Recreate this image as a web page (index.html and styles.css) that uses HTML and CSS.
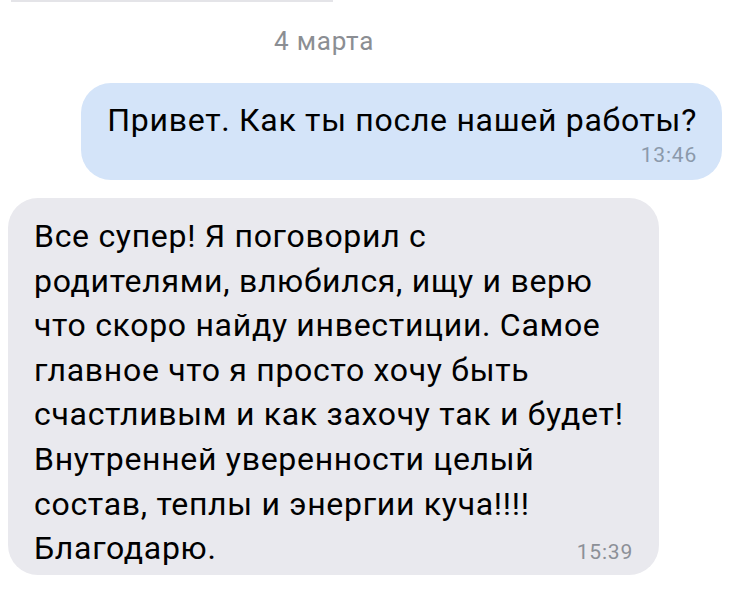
FILE: index.html
```html
<!DOCTYPE html>
<html lang="ru">
<head>
<meta charset="utf-8">
<link rel="stylesheet" href="styles.css">
</head>
<body>
<div class="chat">
  <div class="prev-edge"></div>
  <div class="date">4 марта</div>
  <div class="bubble out">
    <div class="text">Привет. Как ты после нашей работы?</div>
    <div class="time">13:46</div>
  </div>
  <div class="bubble in">
    <div class="text">Все супер! Я поговорил с<br>родителями, влюбился, ищу и верю<br>что скоро найду инвестиции. Самое<br>главное что я просто хочу быть<br>счастливым и как захочу так и будет!<br>Внутренней уверенности целый<br>состав, теплы и энергии куча!!!!<br>Благодарю.</div>
    <div class="time">15:39</div>
  </div>
</div>
</body>
</html>
```
FILE: styles.css
```css
html, body {
  margin: 0;
  padding: 0;
  background: #ffffff;
}

.chat {
  width: 739px;
  height: 590px;
  display: flex;
  flex-direction: column;
  font-family: Roboto, "Noto Sans", sans-serif;
  color: #000000;
  overflow: hidden;
}

.prev-edge {
  width: 322px;
  height: 2px;
  margin-left: 11px;
  background: #e4e4e8;
}

.date {
  align-self: flex-start;
  margin-top: 26px;
  margin-left: 274px;
  font-size: 26px;
  line-height: 26px;
  letter-spacing: 0.8px;
  color: #8b8e93;
}

.bubble {
  border-radius: 30px;
}

.bubble .text {
  font-size: 32px;
  letter-spacing: 0.7px;
}

.bubble .time {
  font-size: 21px;
  line-height: 20px;
  letter-spacing: 0.8px;
}

.out {
  align-self: flex-end;
  display: flex;
  flex-direction: column;
  margin-top: 29px;
  margin-right: 17px;
  padding: 17px 25px 15px 26px;
  background: #d4e4f9;
}

.out .text {
  line-height: 40px;
}

.out .time {
  align-self: flex-end;
  margin-top: 5px;
  color: #8b99ab;
}

.in {
  align-self: flex-start;
  display: grid;
  width: 651px;
  box-sizing: border-box;
  margin-top: 18px;
  margin-left: 8px;
  padding: 16px 26px 4px 26px;
  background: #e9e9ee;
}

.in .text,
.in .time {
  grid-area: 1 / 1;
}

.in .text {
  line-height: 44.6px;
}

.in .time {
  justify-self: end;
  align-self: end;
  margin-bottom: 9px;
  color: #8c9097;
}
```
